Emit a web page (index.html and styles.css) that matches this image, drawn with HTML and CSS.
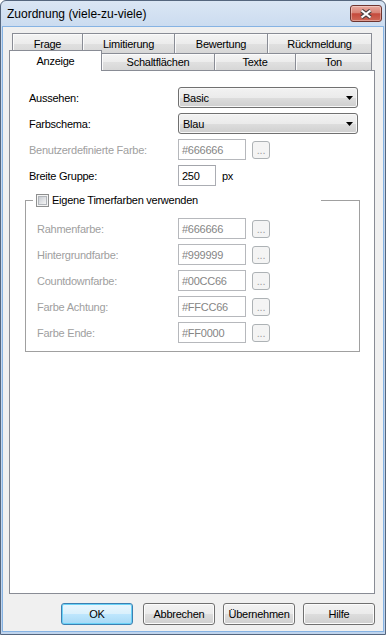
FILE: index.html
```html
<!DOCTYPE html>
<html lang="de">
<head>
    <meta charset="UTF-8">
    <meta name="viewport" content="width=device-width, initial-scale=1.0">
    <title>Zuordnung (viele-zu-viele)</title>
    <link rel="stylesheet" href="styles.css">
</head>
<body>
    <div class="window">
        <div class="titlebar">
            <span class="title">Zuordnung (viele-zu-viele)</span>
            <button class="close-btn" type="button" aria-label="Schließen">
                <svg width="14" height="10" viewBox="0 0 14 10">
                    <path d="M2.5 1.5 L11.5 8.5 M11.5 1.5 L2.5 8.5" stroke="#4b4040" stroke-width="4.2"/>
                    <path d="M2.5 1.5 L11.5 8.5 M11.5 1.5 L2.5 8.5" stroke="#ffffff" stroke-width="2.2"/>
                </svg>
            </button>
        </div>

        <div class="client">
            <div class="tabs">
                <div class="tab-row tab-row-back">
                    <div class="tab" style="width: 71px">Frage</div>
                    <div class="tab" style="width: 93px">Limitierung</div>
                    <div class="tab" style="width: 94px">Bewertung</div>
                    <div class="tab" style="width: 105px">Rückmeldung</div>
                </div>
                <div class="tab-row tab-row-front">
                    <div class="tab tab-active" style="width: 93px">Anzeige</div>
                    <div class="tab" style="width: 114px">Schaltflächen</div>
                    <div class="tab" style="width: 82px">Texte</div>
                    <div class="tab" style="width: 77px">Ton</div>
                </div>
            </div>

            <div class="tab-panel">
                <div class="field field-top">
                    <span class="field-label">Aussehen:</span>
                    <div class="combo">
                        <span>Basic</span>
                        <svg class="combo-arrow" width="7" height="4" viewBox="0 0 7 4"><polygon points="0,0 7,0 3.5,4" fill="#000"/></svg>
                    </div>
                </div>
                <div class="field field-top">
                    <span class="field-label">Farbschema:</span>
                    <div class="combo">
                        <span>Blau</span>
                        <svg class="combo-arrow" width="7" height="4" viewBox="0 0 7 4"><polygon points="0,0 7,0 3.5,4" fill="#000"/></svg>
                    </div>
                </div>
                <div class="field field-top disabled">
                    <span class="field-label">Benutzerdefinierte Farbe:</span>
                    <div class="textbox">#666666</div>
                    <div class="pick">...</div>
                </div>
                <div class="field field-top">
                    <span class="field-label">Breite Gruppe:</span>
                    <div class="textbox textbox-small">250</div>
                    <span class="unit">px</span>
                </div>

                <fieldset class="group">
                    <legend class="group-title">
                        <span class="checkbox"><span class="checkbox-inner"></span></span>
                        Eigene Timerfarben verwenden
                    </legend>
                    <div class="group-body">
                        <div class="field disabled">
                            <span class="field-label">Rahmenfarbe:</span>
                            <div class="textbox">#666666</div>
                            <div class="pick">...</div>
                        </div>
                        <div class="field disabled">
                            <span class="field-label">Hintergrundfarbe:</span>
                            <div class="textbox">#999999</div>
                            <div class="pick">...</div>
                        </div>
                        <div class="field disabled">
                            <span class="field-label">Countdownfarbe:</span>
                            <div class="textbox">#00CC66</div>
                            <div class="pick">...</div>
                        </div>
                        <div class="field disabled">
                            <span class="field-label">Farbe Achtung:</span>
                            <div class="textbox">#FFCC66</div>
                            <div class="pick">...</div>
                        </div>
                        <div class="field disabled">
                            <span class="field-label">Farbe Ende:</span>
                            <div class="textbox">#FF0000</div>
                            <div class="pick">...</div>
                        </div>
                    </div>
                </fieldset>
            </div>

            <div class="dialog-buttons">
                <button class="btn btn-default" type="button">OK</button>
                <button class="btn" type="button">Abbrechen</button>
                <button class="btn" type="button">Übernehmen</button>
                <button class="btn" type="button">Hilfe</button>
            </div>
        </div>
    </div>
</body>
</html>
```

FILE: styles.css
```css
* {
    box-sizing: border-box;
}

body {
    margin: 0;
    font-family: 'Liberation Sans', Arial, sans-serif;
    font-size: 11px;
    letter-spacing: -0.25px;
    color: #000;
    background: #fff;
}

/* window frame */
.window {
    width: 386px;
    height: 635px;
    display: flex;
    flex-direction: column;
    border: 1px solid #55667e;
    border-radius: 6px 6px 0 0;
    background: linear-gradient(#dae6f4, #c9daef 30px, #bfd4ed);
}

.titlebar {
    height: 26px;
    display: flex;
    align-items: center;
    padding: 0 3px 0 6px;
}

.title {
    font-size: 12px;
    letter-spacing: 0;
}

.close-btn {
    margin-left: auto;
    align-self: flex-start;
    margin-top: 4px;
    width: 32px;
    height: 17px;
    padding: 0;
    display: flex;
    align-items: center;
    justify-content: center;
    border: 1px solid #6e3530;
    border-radius: 3px;
    background: linear-gradient(#e9aa9f, #d88477 45%, #c5493c 52%, #cf6a58);
    box-shadow: inset 0 0 0 1px rgba(255, 255, 255, 0.35);
}

.client {
    flex: 1;
    margin: 0 2px 3px;
    padding: 6px 8px 6px 6px;
    display: flex;
    flex-direction: column;
    background: #f0f0f0;
    box-shadow: 0 0 0 1px #86b3e3;
}

/* tabs */
.tabs {
    display: flex;
    flex-direction: column;
}

.tab-row {
    display: flex;
}

.tab-row-back {
    height: 20px;
    padding-left: 3px;
}

.tab-row-front {
    height: 17px;
    padding-left: 2px;
    align-items: flex-end;
    position: relative;
    z-index: 1;
}

.tab {
    height: 100%;
    display: flex;
    align-items: center;
    justify-content: center;
    border: 1px solid #898c95;
    border-bottom: 0;
    background: linear-gradient(#f4f4f4, #ececec 50%, #e0e0e0 52%, #d7d7d7);
    box-shadow: inset 1px 1px 0 #fbfbfb;
}

.tab + .tab {
    margin-left: -1px;
}

.tab-active {
    height: 21px;
    margin-left: -2px;
    margin-bottom: -1px;
    background: #fff;
    box-shadow: none;
    position: relative;
    z-index: 2;
    padding-bottom: 1px;
}

.tab-panel {
    flex: 1;
    border: 1px solid #898c95;
    background: #fff;
    padding: 16px 0 0 15px;
}

/* form rows */
.field {
    display: flex;
    align-items: center;
    height: 21px;
    margin-bottom: 5px;
}

.field-top {
    padding-left: 4px;
}

.field-label {
    width: 149px;
    flex-shrink: 0;
}

.disabled .field-label {
    color: #a0a0a0;
}

.combo {
    width: 180px;
    height: 21px;
    display: flex;
    align-items: center;
    padding: 0 4px 0 4px;
    border: 1px solid #707070;
    border-radius: 3px;
    background: linear-gradient(#f2f2f2, #ebebeb 50%, #dddddd 52%, #cfcfcf);
    box-shadow: inset 0 0 0 1px #f8f8f8;
}

.combo-arrow {
    margin-left: auto;
}

.textbox {
    width: 68px;
    height: 21px;
    display: flex;
    align-items: center;
    padding: 0 3px;
    border: 1px solid #abadb3;
    border-top-color: #a3a5ab;
    background: #fff;
}

.textbox-small {
    width: 38px;
}

.disabled .textbox {
    color: #858585;
    border-color: #b6b8bc;
}

.pick {
    width: 18px;
    height: 18px;
    margin-left: 6px;
    display: flex;
    align-items: flex-end;
    justify-content: center;
    padding-bottom: 2px;
    line-height: 1;
    color: #a0a0a0;
    border: 1px solid #adb2b5;
    border-radius: 3px;
    background: #f4f4f4;
}

.unit {
    margin-left: 6px;
}

/* group box */
.group {
    width: 335px;
    min-width: 0;
    margin: 7px 0 0 0;
    padding: 0;
    border: 1px solid #a0a0a0;
}

.group-title {
    width: 288px;
    height: 14px;
    margin-left: 7px;
    padding: 0 0 0 3px;
    display: flex;
    align-items: center;
    gap: 3px;
}

.checkbox {
    width: 13px;
    height: 13px;
    padding: 1px;
    border: 1px solid #8e8f8f;
    background: #f4f4f4;
    flex-shrink: 0;
}

.checkbox-inner {
    display: block;
    width: 100%;
    height: 100%;
    border: 1px solid #b2b6bb;
    background: linear-gradient(135deg, #c9cdd3, #f5f5f5);
}

.group-body {
    padding: 11px 0 8px 11px;
}

.group .field-label {
    width: 141px;
}

.group .field:last-child {
    margin-bottom: 0;
}

/* dialog buttons */
.dialog-buttons {
    display: flex;
    justify-content: flex-end;
    gap: 8px;
    margin-top: 9px;
}

.btn {
    width: 72px;
    height: 22px;
    padding: 0;
    font-family: inherit;
    font-size: 11px;
    letter-spacing: -0.25px;
    color: #000;
    border: 1px solid #707070;
    border-radius: 3px;
    background: linear-gradient(#f2f2f2, #ebebeb 50%, #dddddd 52%, #cfcfcf);
    box-shadow: inset 0 0 0 1px #fcfcfc;
}

.btn-default {
    margin-right: 2px;
    border-color: #3c7fb1;
    background: linear-gradient(#eaf6fd, #d9f0fc 50%, #bee6fd 52%, #a7d9f5);
    box-shadow: inset 0 0 0 1px #6ad2f7;
}
```
